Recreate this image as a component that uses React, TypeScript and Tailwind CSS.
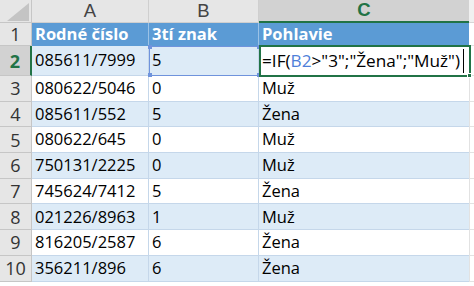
import React from 'react';

const font = { fontFamily: '"Open Sans", "Noto Sans", sans-serif' };

const data: [string, string, string][] = [
  ['085611/7999', '5', ''],
  ['080622/5046', '0', 'Muž'],
  ['085611/552', '5', 'Žena'],
  ['080622/645', '0', 'Muž'],
  ['750131/2225', '0', 'Muž'],
  ['745624/7412', '5', 'Žena'],
  ['021226/8963', '1', 'Muž'],
  ['816205/2587', '6', 'Žena'],
  ['356211/896', '6', 'Žena'],
];

function ColHeader({ label, active }: { label: string; active?: boolean }) {
  return (
    <div
      className={
        active
          ? "flex items-center justify-center bg-[#d2d2d2] border-b-2 border-[#217346] text-[#217346] font-['Liberation_Sans',sans-serif] font-bold text-[18.5px] leading-none"
          : "flex items-center justify-center bg-[#e6e6e6] border-r border-b border-[#cfcfcf] text-[#444] font-['Liberation_Sans',sans-serif] text-[18.5px] leading-none"
      }
    >
      {label}
    </div>
  );
}

function RowHeader({ n, active }: { n: number; active?: boolean }) {
  return (
    <div
      className={
        active
          ? 'flex items-center justify-center bg-[#d2d2d2] border-r-2 border-b border-r-[#217346] border-b-[#c6c6c6] text-[#217346] font-bold text-[18px] leading-none'
          : 'flex items-center justify-center bg-[#e6e6e6] border-r border-b border-[#c6c6c6] text-[#333] text-[18px] leading-none'
      }
    >
      {n}
    </div>
  );
}

export default function App() {
  return (
    <div className="w-[474px] h-[286px] overflow-hidden bg-white" style={font}>
      <div className="relative grid grid-cols-[32px_117px_110px_210px_1fr] grid-rows-[23px_23px_30px_repeat(8,25.7px)]">
        {/* corner */}
        <div className="relative bg-[#e6e6e6] border-r border-b border-[#c6c6c6]">
          <svg className="absolute right-[2px] bottom-[1px]" width="22" height="18" viewBox="0 0 22 18">
            <polygon points="22,0 22,18 0,18" fill="#c4c4c4" />
          </svg>
        </div>
        <ColHeader label="A" />
        <ColHeader label="B" />
        <ColHeader label="C" active />
        <div className="bg-[#f0f0f0] border-b border-[#d6d6d6]" />

        {/* row 1: table header */}
        <RowHeader n={1} />
        <div className="flex items-center pl-[3px] bg-[#5b9bd5] border-r border-[#9bc2e6] text-white font-bold text-[16.5px] leading-none">Rodné číslo</div>
        <div className="flex items-center pl-[3px] bg-[#5b9bd5] border-r border-[#9bc2e6] text-white font-bold text-[16.5px] leading-none">3tí znak</div>
        <div className="flex items-center pl-[3px] bg-[#5b9bd5] text-white font-bold text-[16.5px] leading-none">Pohlavie</div>
        <div className="border-b border-[#e2e2e2]" />

        {data.map((r, i) => {
          const n = i + 2;
          const band = n % 2 === 0 ? 'bg-[#ddebf7]' : 'bg-white';
          return (
            <React.Fragment key={n}>
              <RowHeader n={n} active={n === 2} />
              <div className={`flex items-center pl-[3px] ${band} border-r border-b border-[#c5d7ea] text-[16.5px] leading-none text-black`}>{r[0]}</div>
              <div className={`flex items-center pl-[3px] ${band} border-r border-b border-[#c5d7ea] text-[16.5px] leading-none text-black`}>{r[1]}</div>
              {n === 2 ? (
                <div className="flex items-center pl-[3px] bg-white border-b border-[#c5d7ea] text-[17.2px] leading-none text-black whitespace-nowrap">
                  =IF(<span className="text-[#4f7fd9]">B2</span>&gt;"3";"Žena";"Muž")
                  <span className="ml-[3px] w-px h-[24px] bg-black" />
                </div>
              ) : (
                <div className={`flex items-center pl-[3px] ${band} border-b border-[#c5d7ea] text-[16.5px] leading-none text-black`}>{r[2]}</div>
              )}
              <div className="border-b border-l border-[#e2e2e2]" />
            </React.Fragment>
          );
        })}

        {/* B2 reference highlight */}
        <div className="absolute left-[149px] top-[46px] w-[111px] h-[30px] border border-[#6f93dc] pointer-events-none">
          <span className="absolute -left-[2px] -top-[2px] w-[4px] h-[4px] bg-[#6f93dc]" />
          <span className="absolute -right-[2px] -top-[2px] w-[4px] h-[4px] bg-[#6f93dc]" />
          <span className="absolute -left-[2px] -bottom-[2px] w-[4px] h-[4px] bg-[#6f93dc]" />
          <span className="absolute -right-[2px] -bottom-[2px] w-[4px] h-[4px] bg-[#6f93dc]" />
        </div>

        {/* C2 active cell */}
        <div className="absolute left-[259px] top-[45px] w-[212px] h-[32px] border-2 border-[#217346] pointer-events-none">
          <span className="absolute -right-[3px] -bottom-[3px] w-[5px] h-[5px] bg-[#217346] border border-white" />
        </div>
      </div>
    </div>
  );
}
